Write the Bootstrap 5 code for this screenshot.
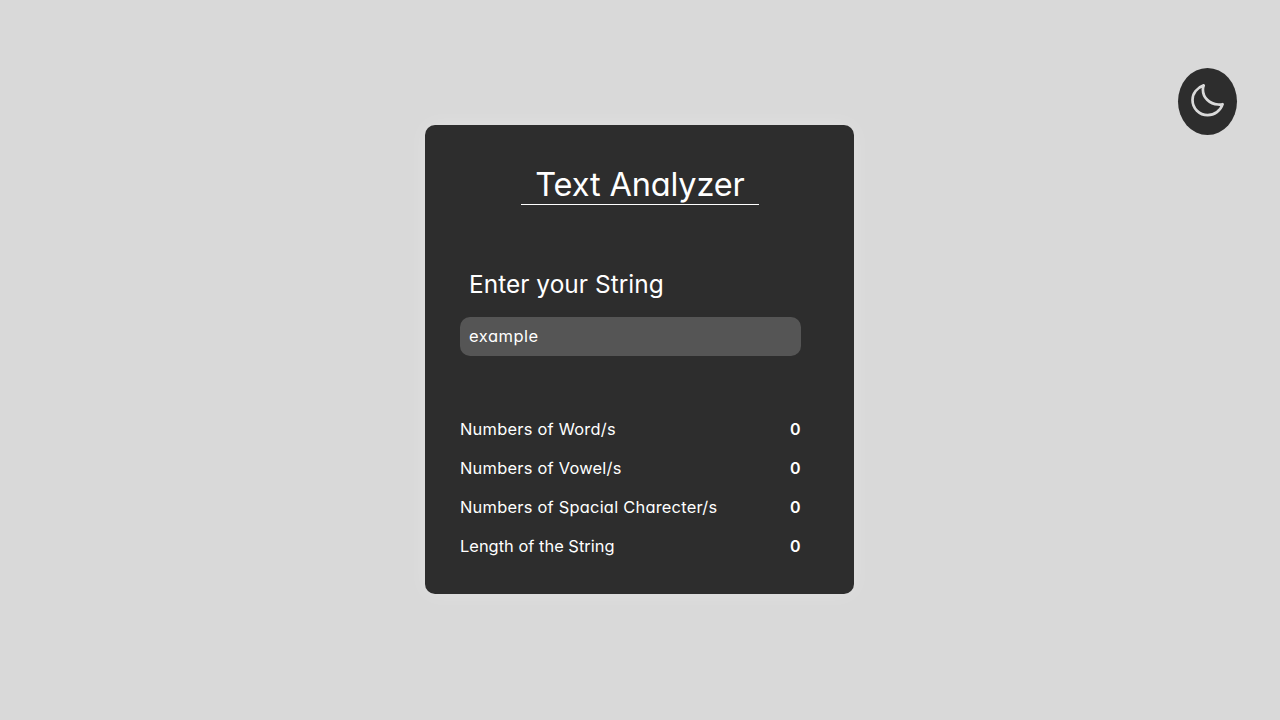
<!DOCTYPE html>
<html lang="en">
<head>
<meta charset="utf-8">
<meta name="viewport" content="width=device-width, initial-scale=1">
<title>Text Analyzer</title>
<link href="https://cdn.jsdelivr.net/npm/bootstrap@5.3.0/dist/css/bootstrap.min.css" rel="stylesheet">
<style>
  body { background: #d9d9d9; color: #fff; font-family: Inter, "Open Sans", sans-serif; font-feature-settings: "cv11"; font-size: 16px; }
  .analyzer { width: 429px; height: 469px; margin-top: -1px; margin-right: 1px; background: #2d2d2d; border-radius: 10px; box-shadow: 0 0 20px rgba(255,255,255,.22); padding: 39px 53px 0 35px; }
  .title { width: 238px; height: 41px; margin-left: 61px; border-bottom: 1px solid #fff; font-size: 32.5px; font-weight: 400; line-height: 42px; letter-spacing: -.15px; white-space: nowrap; }
  .prompt { margin-top: 60px; padding-left: 9px; font-size: 24.4px; line-height: 38px; height: 38px; letter-spacing: .05px; }
  .entry, .entry:focus { height: 39px; margin-top: 14px; padding: 0 9px 1px; border: 0; border-radius: 10px; background: #555; color: #fff; box-shadow: none; font-size: 16.5px; font-feature-settings: "cv11"; letter-spacing: .5px; }
  .results { margin-top: 54px; font-size: 16.4px; letter-spacing: .25px; }
  .results li { height: 39px; line-height: 39px; }
  .results li:last-child span { letter-spacing: .03px; }
  .results b { font-size: 16px; font-weight: 600; letter-spacing: 0; padding-right: .5px; }
  .theme { top: 68px; right: 43px; width: 59px; height: 67px; background: #2d2d2d; border-radius: 50%; color: #dadada; padding: 0 0 3px; }
</style>
</head>
<body class="vh-100 overflow-hidden">
<button class="theme btn position-absolute border-0 d-flex align-items-center justify-content-center" aria-label="Toggle theme">
  <svg width="33" height="33" viewBox="0 0 33 33" fill="none" stroke="#dadada" stroke-width="2.7" stroke-linecap="round" stroke-linejoin="round"><path d="M12.7 1.4C6.1 3.6 1.5 9.3 1.5 16c0 8.4 6.8 15.2 15.2 15.2 6.7 0 12.8-4.3 14.9-11-1.6.4-3.2.5-4.4.3C18.2 20.1 11.9 13.3 11.9 5.4c0-1.4.3-2.8.8-4z"/></svg>
</button>
<div class="d-flex vh-100 align-items-center justify-content-center">
  <main class="analyzer">
    <h1 class="title text-center mb-0"><span>Text Analyzer</span></h1>
    <label class="prompt d-block" for="entry"><span>Enter your String</span></label>
    <input class="entry form-control" id="entry" value="example">
    <ul class="results list-unstyled mb-0">
      <li class="d-flex justify-content-between"><span>Numbers of Word/s</span><b>0</b></li>
      <li class="d-flex justify-content-between"><span>Numbers of Vowel/s</span><b>0</b></li>
      <li class="d-flex justify-content-between"><span>Numbers of Spacial Charecter/s</span><b>0</b></li>
      <li class="d-flex justify-content-between"><span>Length of the String</span><b>0</b></li>
    </ul>
  </main>
</div>
<script src="https://cdn.jsdelivr.net/npm/bootstrap@5.3.0/dist/js/bootstrap.bundle.min.js"></script>
</body>
</html>
